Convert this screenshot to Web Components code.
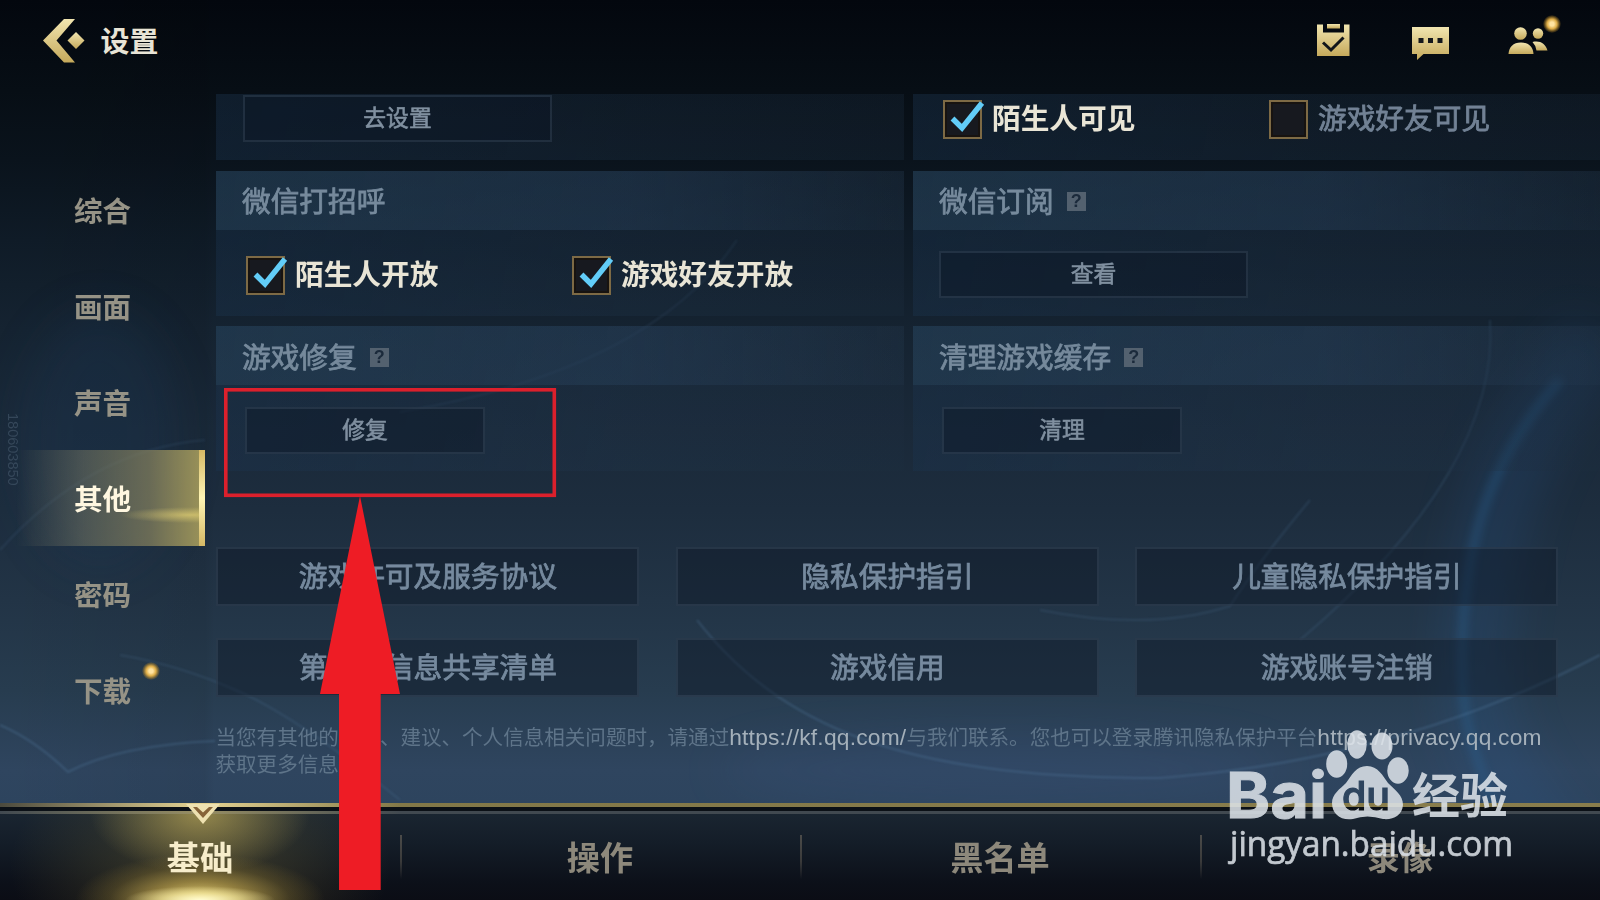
<!DOCTYPE html>
<html lang="zh-CN">
<head>
<meta charset="utf-8">
<title>设置</title>
<style>
html,body{margin:0;width:1600px;height:900px;overflow:hidden;background:#04080f;font-family:"Noto Sans CJK SC",sans-serif}
</style>
</head>
<body>
<game-settings></game-settings>
<script>
function define(name, html, after){
  const t=document.createElement('template');
  customElements.define(name,class extends HTMLElement{
    connectedCallback(){
      if(this.shadowRoot)return;
      t.innerHTML=html;
      this.attachShadow({mode:'open'}).append(t.content.cloneNode(true));
      if(after)after(this,this.shadowRoot);
    }
  });
}
const gold='<linearGradient id="g" x1="0" y1="0" x2="0" y2="1"><stop offset="0" stop-color="#f1e5b0"/><stop offset="1" stop-color="#c5a95b"/></linearGradient>';

define('notice-dot',`<style>:host{display:block;width:18px;height:18px;border-radius:50%;background:radial-gradient(circle,#ffe3a0 0 16%,#dfae48 38%,rgba(190,140,40,.45) 58%,rgba(150,110,20,0) 72%)}</style>`);

define('scene-backdrop',`<style>:host{display:block;position:absolute;inset:0;background:
 linear-gradient(90deg,rgba(0,0,0,.0) 0,rgba(0,0,0,.06) 12.8%,rgba(0,0,0,0) 13.4%),
 linear-gradient(180deg,#03070e 0,#070e15 90px,#0a131c 160px,#0f1b27 240px,#152331 330px,#1a2939 430px,#1d2d3e 510px,#223446 600px,#273c4f 690px,#2f455f 770px,#2d445e 805px)}
 svg{display:block}</style>
<svg width="1600" height="900" fill="none">
<defs><filter id="b" x="-50%" y="-50%" width="200%" height="200%"><feGaussianBlur stdDeviation="22"/></filter><filter id="s" x="-20%" y="-20%" width="140%" height="140%"><feGaussianBlur stdDeviation="4"/></filter><filter id="t"><feGaussianBlur stdDeviation=".8"/></filter></defs>
<path d="M1600 340C1510 430 1485 530 1475 640S1520 800 1580 880" stroke="#2c5c96" stroke-width="70" opacity=".2" filter="url(#b)"/>
<path d="M1560 380C1480 470 1464 560 1462 650S1482 760 1510 860" stroke="#2a6ca0" stroke-width="9" opacity=".3" filter="url(#s)"/>
<ellipse cx="100" cy="440" rx="80" ry="130" fill="#1c3854" opacity=".3" filter="url(#b)"/>
<ellipse cx="1000" cy="770" rx="280" ry="35" fill="#3a5580" opacity=".22" filter="url(#b)"/>
<g stroke="#5980a6" stroke-width="2" opacity=".32" filter="url(#t)">
<path d="M0 725Q35 740 68 772Q120 745 215 741"/><path d="M120 655Q180 665 240 692T400 800" opacity=".6"/>
<path d="M697 620C790 740 930 778 1160 778Q1400 760 1600 655" /><path d="M1040 610Q1150 632 1230 606Q1260 560 1310 500" opacity=".6"/>
<path d="M1300 640Q1500 470 1490 320" opacity=".6"/><path d="M737 240Q650 370 400 412" opacity=".5"/><path d="M0 550Q90 450 205 440" opacity=".5"/>
</g></svg>`);

define('back-icon',`<style>:host{display:block;width:42px;height:44px}svg{display:block}</style><svg width="42" height="44" viewBox="0 0 42 44"><defs>${gold}</defs><path d="M21 0H32L13.500 21.500L32 43.500H21L0 21.500Z" fill="url(#g)"/><path d="M33 13L41.500 21.500L33 30L24.500 21.500Z" fill="url(#g)"/></svg>`);
define('task-icon',`<style>:host{display:block}svg{display:block}</style><svg width="33" height="33" viewBox="0 0 33 33"><defs>${gold}</defs><path d="M0 .5H6V8.500H27V.5H32.500V32H0Z" fill="url(#g)"/><path d="M10 0H23V4.500H10Z" fill="url(#g)"/><path d="M6 18.500L14 26L26.500 13.500" fill="none" stroke="#11151a" stroke-width="3"/></svg>`);
define('chat-icon',`<style>:host{display:block}svg{display:block}</style><svg width="37" height="34" viewBox="0 0 37 34"><defs>${gold}</defs><path d="M0 0H37V27H11.500L5 33V27H0Z" fill="url(#g)"/><path d="M6.500 11h5v5h-5zM16 11h5v5h-5zM25.500 11h5v5h-5z" fill="#14171c"/></svg>`);
define('friends-icon',`<style>:host{display:block;position:relative}svg{display:block}notice-dot{position:absolute;left:35px;top:-12px}</style><svg width="40" height="28" viewBox="0 0 40 28"><defs>${gold}</defs><circle cx="12.500" cy="6.500" r="6.300" fill="url(#g)"/><path d="M.5 27C1 20 5 15.500 13 15.500S25 20 25.500 27Z" fill="url(#g)"/><circle cx="30" cy="6.500" r="5.200" fill="url(#g)"/><path d="M24.500 15C32 13.500 37 16 39.500 23.500H28.500Q27.500 18 24.500 15Z" fill="url(#g)"/></svg><notice-dot></notice-dot>`);

define('top-bar',`<style>:host{display:flex;align-items:center;height:94px;padding:0 52px 0 43px;box-sizing:border-box;position:relative}
back-icon{margin-top:-13px}h1{margin:-16px 0 0 15.500px;font-size:28.900px;line-height:40px;font-weight:700;color:#e8e4d6;flex:1}
nav{display:flex;align-items:flex-start;height:48px}task-icon{margin:.5px 62px 0 .5px}chat-icon{margin:4px 59px 0 0}friends-icon{margin-top:4px}</style>
<back-icon></back-icon><h1>设置</h1><nav><task-icon></task-icon><chat-icon></chat-icon><friends-icon></friends-icon></nav>`);

define('side-item',`<style>:host{display:flex;align-items:center;justify-content:center;height:96px;box-sizing:border-box;position:relative;font-size:28.600px;font-weight:700;color:#969386;padding-bottom:4px}
:host([active]){color:#fff7e0;border-right:6px solid #e5cf7c;border-image:linear-gradient(#d4b763,#fff5b4 50%,#d4b763) 1;padding-left:6px;padding-bottom:1px;
background:radial-gradient(ellipse 70px 8px at 190px 65px,rgba(240,220,120,.6),transparent),linear-gradient(90deg,rgba(110,112,90,0) 8%,rgba(122,122,100,.5) 42%,rgba(135,130,94,.72) 75%,rgba(165,155,92,.9) 100%)}
notice-dot{position:absolute;left:142px;top:19px}notice-dot:not([on]){display:none}</style><slot></slot><notice-dot></notice-dot>`,
(h,r)=>{if(h.hasAttribute('dot'))r.querySelector('notice-dot').setAttribute('on','')});

define('side-menu',`<style>:host{display:flex;flex-direction:column;width:205px;box-sizing:border-box;padding-top:69px;position:relative}
span{position:absolute;left:3px;top:319px;height:76px;writing-mode:vertical-rl;font:14.500px/20px "Liberation Sans",sans-serif;color:#44576a;opacity:.65}
side-item[active]{margin:-1px 0 1px}</style>
<side-item>综合</side-item><side-item>画面</side-item><side-item>声音</side-item><side-item active>其他</side-item><side-item>密码</side-item><side-item dot>下载</side-item><span>180603850</span>`);

define('help-badge',`<style>:host{display:flex;align-items:center;justify-content:center;width:19px;height:19px;background:#53616f;color:#1b2a3b;font:700 18px/19px "Liberation Sans",sans-serif}</style>?`);

define('flat-button',`<style>:host{display:flex;align-items:center;justify-content:center;box-sizing:border-box;width:240px;height:47px;border:2px solid rgba(66,86,104,.36);background:rgba(12,22,36,.42);color:#8090a0;font-size:22.800px;line-height:1;-webkit-text-stroke:.6px currentColor}
:host([size=link]){width:auto;height:59px;font-size:28.700px;color:#768a9e;-webkit-text-stroke-width:.8px}:host([size=wide]){width:309px}
b{font-weight:inherit;position:relative;top:-1px}</style><b><slot></slot></b>`);

define('check-option',`<style>:host{display:flex;flex:none;align-items:center;height:39px;width:320px;box-sizing:border-box;font-size:28.700px;line-height:38px;color:#728295;-webkit-text-stroke:.8px currentColor}
:host([checked]){color:#e9e5d6;font-weight:700;-webkit-text-stroke-width:0}
i{display:block;flex:none;box-sizing:border-box;width:39px;height:39px;border:2px solid #7d6a45;background:#17191f;margin-right:10px;box-shadow:inset 0 0 0 2px #171310}
svg{display:none;overflow:visible}:host([checked]) svg{display:block}b{font-weight:inherit;position:relative;top:-2.500px;white-space:nowrap}</style>
<i><svg width="35" height="35"><path d="M7.500 16.500L17 26L37 1" fill="none" stroke="#62cdf8" stroke-width="5.500"/></svg></i><b><slot></slot></b>`);

define('setting-card',`<style>:host{display:flex;flex-direction:column;background:linear-gradient(100deg,rgba(28,52,78,.42),rgba(34,54,76,.3) 60%,rgba(30,46,64,.3));overflow:hidden}
header{flex:none;height:59px;display:flex;align-items:center;gap:13px;padding:0 26px;background:linear-gradient(90deg,rgba(42,70,92,.44),rgba(42,68,96,.38) 60%,rgba(40,62,84,.16))}
h2{margin:0;font-size:28.700px;line-height:40px;font-weight:400;color:#768a9c;-webkit-text-stroke:.8px currentColor}
header[hidden]{display:none}help-badge[hidden]{display:none}help-badge{margin-top:3px}
div{display:flex;padding:var(--body,21px 26px)}</style><header><h2></h2><help-badge></help-badge></header><div><slot></slot></div>`,
(h,r)=>{const l=h.getAttribute('label');r.querySelector('header').hidden=!l;r.querySelector('h2').textContent=l||'';r.querySelector('help-badge').hidden=!h.hasAttribute('help')});

define('settings-content',`<style>:host{display:block;width:1384px;margin-left:11px}
.cards{display:grid;grid-template-columns:688px 687px;grid-template-rows:66px 145px 145px;gap:10.500px 9px}
.links{display:grid;grid-template-columns:repeat(3,423px);gap:32px 36.500px;padding:76px 0 0 .4px}
p{margin:26px 0 0 -.5px;font-size:20.560px;line-height:27px;color:#5e7489;white-space:nowrap}
a{font-family:"Liberation Sans",sans-serif;color:#a4b0ba;font-size:22.800px;line-height:1;letter-spacing:.2px}</style>
<div class="cards">
<setting-card style="--body:1px 27px"><flat-button size="wide">去设置</flat-button></setting-card>
<setting-card style="--body:6px 30px"><check-option checked style="width:326px">陌生人可见</check-option><check-option>游戏好友可见</check-option></setting-card>
<setting-card label="微信打招呼" style="--body:26px 30px"><check-option checked style="width:326px">陌生人开放</check-option><check-option checked>游戏好友开放</check-option></setting-card>
<setting-card label="微信订阅" help><flat-button size="wide">查看</flat-button></setting-card>
<setting-card label="游戏修复" help style="--body:22px 29px"><flat-button>修复</flat-button></setting-card>
<setting-card label="清理游戏缓存" help style="--body:22px 29px"><flat-button>清理</flat-button></setting-card>
</div>
<div class="links"><flat-button size="link">游戏许可及服务协议</flat-button><flat-button size="link">隐私保护指引</flat-button><flat-button size="link">儿童隐私保护指引</flat-button><flat-button size="link">第三方信息共享清单</flat-button><flat-button size="link">游戏信用</flat-button><flat-button size="link">游戏账号注销</flat-button></div>
<p>当您有其他的问题、建议、个人信息相关问题时，请通过<a>https://kf.qq.com/</a>与我们联系。您也可以登录腾讯隐私保护平台<a>https://privacy.qq.com</a><br>获取更多信息。</p>`);

define('bottom-tab',`<style>:host{display:flex;flex:0 0 400px;align-items:center;justify-content:center;box-sizing:border-box;position:relative;font-size:33.200px;font-weight:700;color:#8d887b;padding:0 0 3px}
:host(:not(:last-of-type))::after{content:"";position:absolute;right:-2px;top:21px;width:2px;height:44px;background:linear-gradient(#4b4b49,#3a3a3a 60%,transparent)}
:host([active]){color:#f7edcb;background:radial-gradient(ellipse 75px 14px at 50% 100%,#fffbd0,rgba(255,244,170,.6) 50%,transparent),radial-gradient(ellipse 125px 46px at 50% 100%,rgba(245,222,125,.95) 0,rgba(205,175,80,.6) 40%,rgba(150,125,50,.28) 72%,transparent),radial-gradient(ellipse 110px 60px at 50% 0,rgba(190,170,88,.7),transparent),radial-gradient(ellipse 190px 120px at 50% 60%,rgba(100,90,48,.55),transparent)}
svg{position:absolute;left:184.500px;top:-11px;display:none}:host([active]) svg{display:block}</style>
<slot></slot><svg width="36" height="22"><path d="M1 1H35L18 21Z" fill="#eee1b0"/><path d="M8 4H12L18 9.500L24 4H28L18 15Z" fill="#876438"/></svg>`);
define('bottom-tabs',`<style>:host{display:flex;height:97px;box-sizing:border-box;padding-top:11px;background:linear-gradient(90deg,#4a493d,#e6d493 200px,#827848 400px,#897d4c) 0 0/100% 4px no-repeat,linear-gradient(#0b1016,#0b1016) 0 4px/100% 4px no-repeat,linear-gradient(90deg,#414950,#988f64 200px,#414950 400px) 0 8px/100% 3px no-repeat,linear-gradient(#1c2834,#141d28 40px,#0c1019 80px,#0b0d15);overflow:hidden}</style>
<bottom-tab active>基础</bottom-tab><bottom-tab>操作</bottom-tab><bottom-tab>黑名单</bottom-tab><bottom-tab>录像</bottom-tab>`);

define('red-callout',`<style>:host{position:absolute;inset:0;display:block}svg{display:block}</style><svg width="1600" height="900"><rect x="225.800" y="389.800" width="328.500" height="105.500" fill="none" stroke="#dc202c" stroke-width="3.600"/><path d="M360 496L400 694H380.700V890H339V694H320Z" fill="#ee1c25"/></svg>`);

define('site-watermark',`<style>:host{position:absolute;inset:0;display:block;opacity:.86}svg{display:block}text{fill:#dfe5eb}</style>
<svg width="1600" height="900"><defs><mask id="m"><rect width="1600" height="900" fill="#fff"/><text x="1342" y="810" style="fill:#000;stroke:#000;stroke-width:1.200" font-family="Inter" font-weight="500" font-size="40" textLength="48" lengthAdjust="spacingAndGlyphs">du</text></mask></defs>
<text x="1226" y="817.500" font-family="Inter" font-weight="700" font-size="63.500" textLength="101" lengthAdjust="spacingAndGlyphs" style="stroke:#dfe5eb;stroke-width:1">Bai</text>
<g fill="#dfe5eb"><ellipse cx="1336.700" cy="764" rx="10.500" ry="13.700"/><ellipse cx="1357" cy="744.500" rx="9.700" ry="14.200"/><ellipse cx="1382" cy="746" rx="10.500" ry="13.500"/><ellipse cx="1398" cy="770.500" rx="10.700" ry="13.200"/>
<path mask="url(#m)" d="M1367 766C1378 766 1383 776 1388 783C1395 790 1403 795 1403 805C1402 816 1393 820 1383 819Q1367 814 1353 819C1341 821 1332 814 1332 803C1332 794 1340 789 1346 783C1352 775 1356 766 1367 766Z"/></g>
<text x="1412" y="813" font-family="Noto Sans CJK SC" font-weight="700" font-size="48" textLength="96" lengthAdjust="spacingAndGlyphs">经验</text>
<text x="1230" y="855.500" font-family="Open Sans" font-weight="400" font-size="34" textLength="283" lengthAdjust="spacingAndGlyphs" style="stroke:#dfe5eb;stroke-width:.7">jingyan.baidu.com</text></svg>`);

define('game-settings',`<style>:host{display:flex;flex-direction:column;position:relative;width:1600px;height:900px;overflow:hidden}
main{display:flex;position:relative;height:709px}bottom-tabs{position:relative}</style>
<scene-backdrop></scene-backdrop><top-bar></top-bar><main><side-menu></side-menu><settings-content></settings-content></main><bottom-tabs></bottom-tabs><red-callout></red-callout><site-watermark></site-watermark>`);
</script>
</body>
</html>
